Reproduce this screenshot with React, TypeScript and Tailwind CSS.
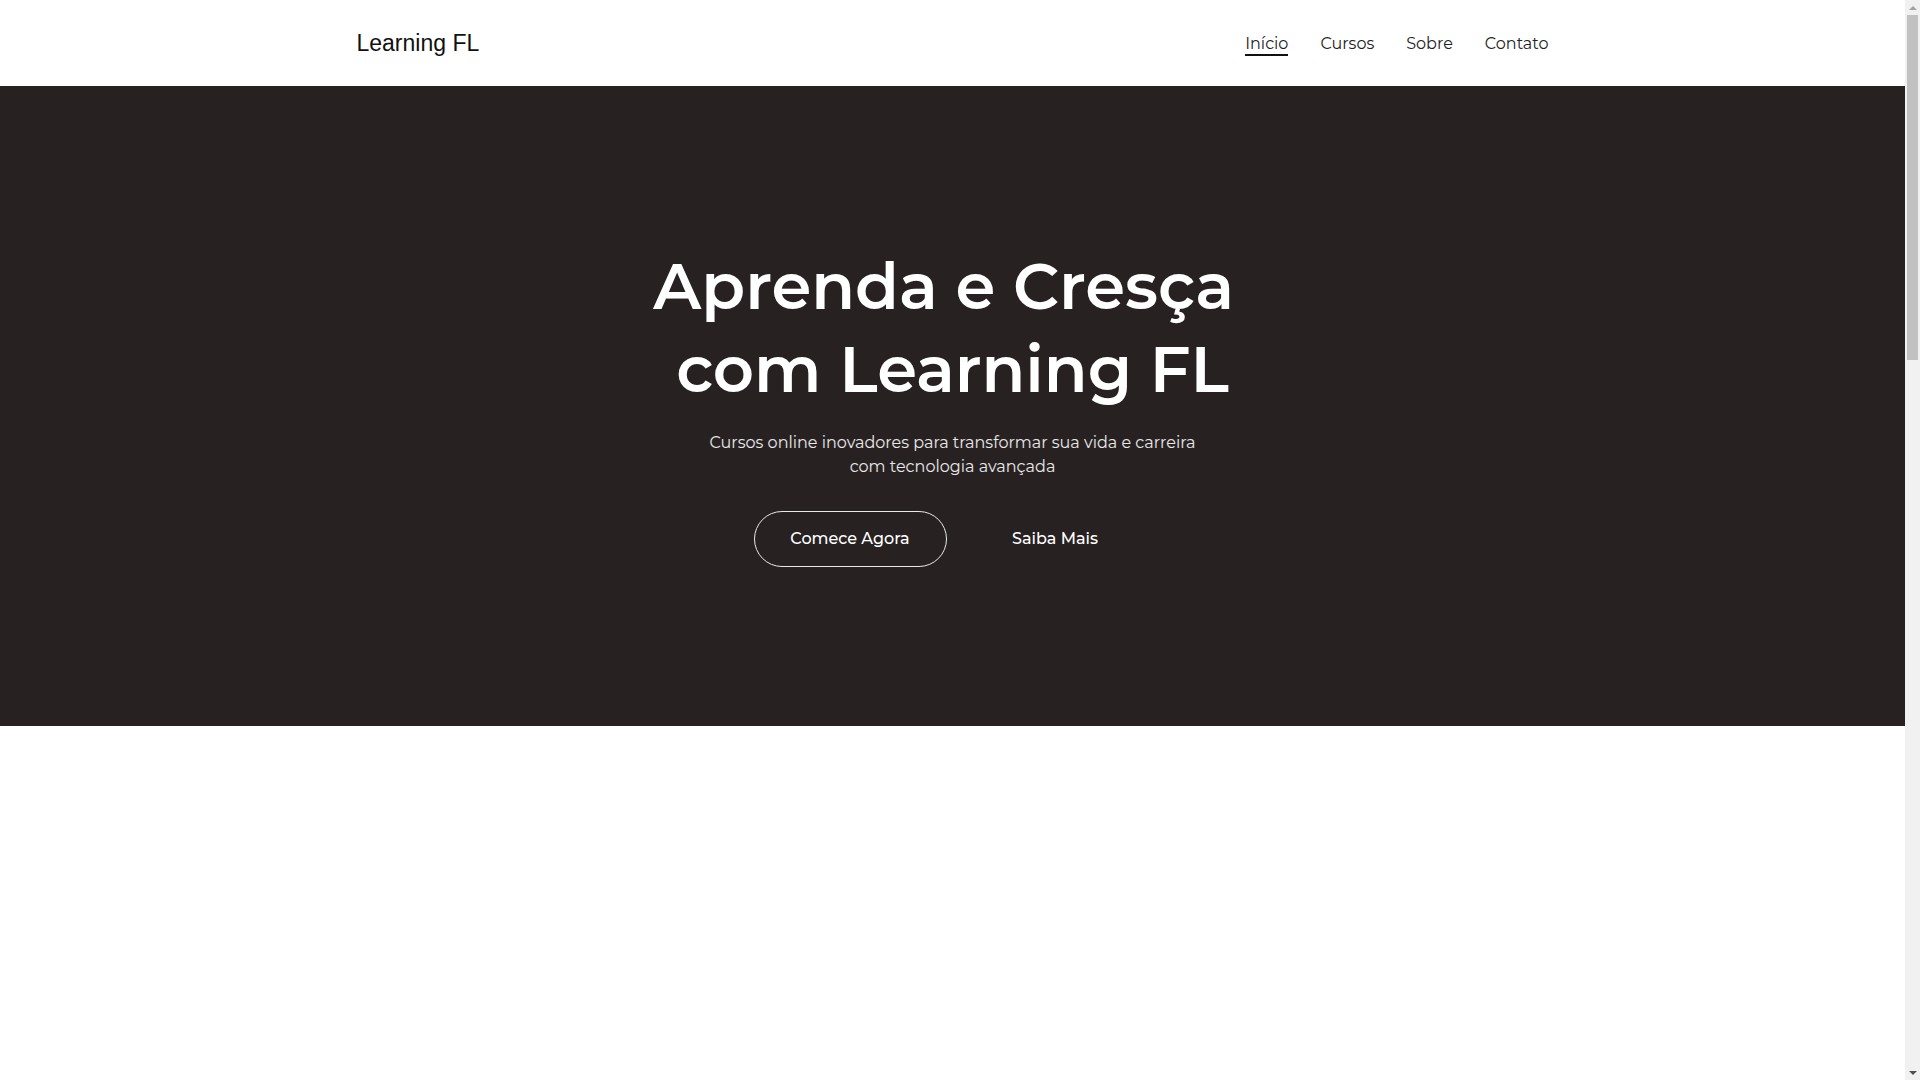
const navItems = ["Início", "Cursos", "Sobre", "Contato"];

const sans = "font-['Montserrat','Noto_Sans',sans-serif]";

function Header() {
  return (
    <header className="h-[86px] shrink-0 bg-white">
      <div className="mx-auto flex h-full max-w-[1192px] items-center justify-between">
        <a href="#" className="font-['Liberation_Sans',Arial,sans-serif] text-[23px] text-[#111]">
          Learning FL
        </a>
        <nav className={`${sans} flex items-center gap-8 text-base leading-5 text-[#222]`}>
          {navItems.map((label, i) => (
            <a
              key={label}
              href="#"
              className={
                i === 0
                  ? "border-b-2 border-[#111] pt-[3px]"
                  : "border-b-2 border-transparent pt-[3px]"
              }
            >
              {label}
            </a>
          ))}
        </nav>
      </div>
    </header>
  );
}

function Hero() {
  return (
    <section className={`${sans} flex h-[640px] shrink-0 flex-col items-center justify-center bg-[#272121] text-white`}>
      <h1 className="text-center text-[64px] font-semibold leading-[1.3]">
        Aprenda e Cresça{"\u00a0"}
        <br />
        com Learning FL
      </h1>
      <p className="mt-5 max-w-[500px] text-center text-base leading-6 text-white/90">
        Cursos online inovadores para transformar sua vida e carreira com tecnologia avançada
      </p>
      <div className="mt-8 flex items-center gap-3">
        <button className="h-14 w-[193px] rounded-full border border-white/90 text-base font-medium">
          Comece Agora
        </button>
        <button className="h-14 w-[193px] rounded-full border border-transparent text-base font-medium">
          Saiba Mais
        </button>
      </div>
    </section>
  );
}

// fake browser scrollbar, the reference was taken with one showing
function Scrollbar() {
  return (
    <div className="flex w-[15px] shrink-0 flex-col items-center bg-[#f1f1f1]">
      <div className="flex h-[15px] w-full items-center justify-center">
        <span className="h-0 w-0 border-x-[4px] border-b-[4px] border-x-transparent border-b-[#a3a3a3]" />
      </div>
      <div className="h-[345px] w-[11px] bg-[#c1c1c1]" />
      <div className="flex-1" />
      <div className="flex h-[15px] w-full items-center justify-center">
        <span className="h-0 w-0 border-x-[4px] border-t-[4px] border-x-transparent border-t-[#505050]" />
      </div>
    </div>
  );
}

export default function App() {
  return (
    <div className="flex h-screen overflow-hidden bg-white">
      <main className="flex min-w-0 flex-1 flex-col">
        <Header />
        <Hero />
        <section className="flex-1 bg-white" />
      </main>
      <Scrollbar />
    </div>
  );
}
